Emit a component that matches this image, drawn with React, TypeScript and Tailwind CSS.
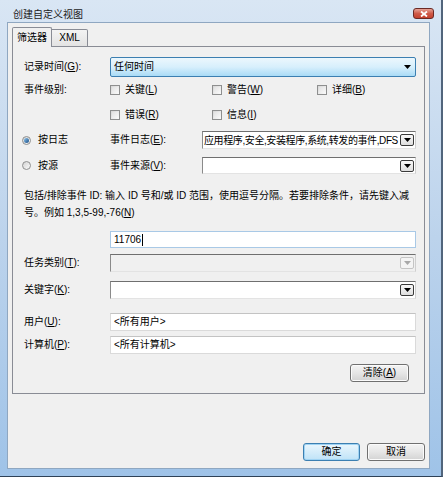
import React from 'react';

const font = "font-['Liberation_Sans','Noto_Sans_CJK_SC',sans-serif]";

function Key({ label, k, colon = true }: { label: string; k: string; colon?: boolean }) {
  return (
    <>
      {label}(<u>{k}</u>){colon ? ':' : ''}
    </>
  );
}

function Arrow({ color = '#000' }: { color?: string }) {
  return (
    <svg width="7" height="4" viewBox="0 0 7 4">
      <path d="M0 0h7L3.5 4z" fill={color} />
    </svg>
  );
}

function Combo({ text, disabled }: { text?: string; disabled?: boolean }) {
  return (
    <div
      className={`flex items-center h-full border border-t-[#6f6f6f] border-l-[#8a8a8a] border-r-[#cfcfcf] border-b-[#e3e3e3] ${
        disabled ? 'bg-[#f0f0f0]' : 'bg-white'
      }`}
    >
      <div className="flex-1 min-w-0 overflow-hidden whitespace-nowrap pl-[1px] text-[10px] leading-[15px] tracking-[-0.4px] text-black">
        {text}
      </div>
      <div
        className={`w-[14px] h-[12px] mr-[1px] shrink-0 rounded-[2px] flex items-center justify-center border ${
          disabled ? 'border-[#c4c4c4] bg-[#f4f4f4]' : 'border-[#3a3a3a] bg-gradient-to-b from-[#f7f7f7] to-[#dedede]'
        }`}
      >
        <Arrow color={disabled ? '#a8a8a8' : '#000'} />
      </div>
    </div>
  );
}

function Check({ label }: { label: React.ReactNode }) {
  return (
    <div className="flex items-center gap-[5px]">
      <div className="w-[10px] h-[10px] border border-[#8e8f8f] bg-gradient-to-br from-[#d6d6d6] to-[#fbfbfb] p-px">
        <div className="w-full h-full bg-gradient-to-br from-[#e2e2e2] to-[#f8f8f8]" />
      </div>
      <span className="text-[10px] leading-[14px] text-black">{label}</span>
    </div>
  );
}

function Radio({ checked, label }: { checked?: boolean; label: string }) {
  return (
    <div className="flex items-center gap-[7px] w-[88px] -ml-[2px]">
      <div className="w-[9px] h-[9px] rounded-full border border-[#8e8f8f] bg-gradient-to-br from-[#d4d4d4] to-[#fafafa] flex items-center justify-center">
        {checked && <div className="w-[5px] h-[5px] rounded-full bg-gradient-to-br from-[#8fc6ee] to-[#1a4f86]" />}
      </div>
      <span className="text-[10px] leading-[14px] text-black">{label}</span>
    </div>
  );
}

function Button({ children, primary, w }: { children: React.ReactNode; primary?: boolean; w: string }) {
  return (
    <div
      className={`${w} h-[18px] rounded-[3px] border flex items-center justify-center text-[10px] leading-[14px] text-black ${
        primary
          ? 'border-[#3c7fb1] bg-gradient-to-b from-[#eaf6fd] to-[#bfe3f7] shadow-[inset_0_0_0_1px_#9fd3f3]'
          : 'border-[#707070] bg-gradient-to-b from-[#f4f4f4] via-[#e6e6e6] to-[#d3d3d3] shadow-[inset_0_0_0_1px_#fbfbfb]'
      }`}
    >
      {children}
    </div>
  );
}

function Row({ label, mt, h, children }: { label: React.ReactNode; mt: string; h: string; children: React.ReactNode }) {
  return (
    <div className={`flex items-center ${mt} ${h}`}>
      <div className="w-[86px] shrink-0 text-[10px] leading-[14px] text-black">{label}</div>
      <div className="w-[306px] h-full">{children}</div>
    </div>
  );
}

function TextBox({ value, focused }: { value: string; focused?: boolean }) {
  return (
    <div
      className={`h-full bg-white border flex items-center pl-[3px] text-[10px] leading-[14px] text-black ${
        focused ? 'border-[#a9c9e6]' : 'border-[#dadada] border-t-[#c3c3c3]'
      }`}
    >
      {value}
      {focused && <span className="w-px h-[12px] bg-black ml-px" />}
    </div>
  );
}

export default function App() {
  return (
    <div className={`${font} w-[443px] h-[477px] flex flex-col bg-gradient-to-b from-[#d9e6f4] via-[#bcd3ec] to-[#9fc3e8] border-r-2 border-b border-r-[#51657c] border-b-[#2e4257]`}>
      <div className="h-[22px] flex items-start justify-between pl-[13px] pr-[7px]">
        <span className="text-[10px] leading-[14px] mt-[8px] text-[#1b1b1b]">创建自定义视图</span>
        <div className="mt-[8px] w-[21px] h-[11px] rounded-[3px] border border-[#6b2a25] bg-gradient-to-b from-[#e6a296] via-[#cf5a48] to-[#c4402c] flex items-center justify-center">
          <svg width="8" height="6" viewBox="0 0 8 6">
            <path d="M1 0.5L7 5.5M7 0.5L1 5.5" stroke="#fff" strokeWidth="1.8" />
          </svg>
        </div>
      </div>
      <div className="flex flex-1">
        <div className="w-[7px] shrink-0" />
        <div className="w-[423px] h-[447px] bg-[#f0f0f0] border border-[#8fa7c1] flex flex-col px-[4px] pt-[4px]">
          <div className="flex items-end h-[20px] relative z-10">
            <div className="h-[20px] w-[40px] border border-b-0 border-[#898c95] bg-[#f0f0f0] rounded-t-[2px] flex items-center justify-center text-[10px] leading-[14px] text-black">
              筛选器
            </div>
            <div className="h-[18px] w-[36px] border border-l-0 border-[#898c95] bg-gradient-to-b from-[#f3f3f3] to-[#e3e3e3] rounded-tr-[2px] flex items-center justify-center text-[10px] leading-[14px] text-black">
              XML
            </div>
          </div>
          <div className="-mt-px w-[413px] h-[348px] border border-[#898c95] bg-[#f0f0f0] pl-[11px] pr-[8px] flex flex-col">
            <Row label={<Key label="记录时间" k="G" />} mt="mt-[10px]" h="h-[20px]">
              <div className="h-full rounded-[2px] border border-[#3c7fb1] bg-gradient-to-b from-[#ecf7fd] via-[#d7effc] to-[#a9dbf6] flex items-center justify-between pl-[3px] pr-[4px]">
                <span className="text-[10px] leading-[14px] text-black">任何时间</span>
                <Arrow />
              </div>
            </Row>
            <div className="flex items-center mt-[5px] h-[16px]">
              <div className="w-[86px] text-[10px] leading-[14px] text-black">事件级别:</div>
              <div className="w-[102px]"><Check label={<Key label="关键" k="L" colon={false} />} /></div>
              <div className="w-[105px]"><Check label={<Key label="警告" k="W" colon={false} />} /></div>
              <Check label={<Key label="详细" k="B" colon={false} />} />
            </div>
            <div className="flex items-center mt-[9px] h-[16px]">
              <div className="w-[86px]" />
              <div className="w-[102px]"><Check label={<Key label="错误" k="R" colon={false} />} /></div>
              <Check label={<Key label="信息" k="I" colon={false} />} />
            </div>
            <div className="flex items-center mt-[8px] h-[18px]">
              <Radio checked label="按日志" />
              <div className="w-[92px] text-[10px] leading-[14px] text-black"><Key label="事件日志" k="E" /></div>
              <div className="w-[214px] h-full">
                <Combo text="应用程序,安全,安装程序,系统,转发的事件,DFS 复制,Hardware Events" />
              </div>
            </div>
            <div className="flex items-center mt-[8px] h-[17px]">
              <Radio label="按源" />
              <div className="w-[92px] text-[10px] leading-[14px] text-black"><Key label="事件来源" k="V" /></div>
              <div className="w-[214px] h-full">
                <Combo />
              </div>
            </div>
            <p className="mt-[13px] text-[10px] leading-[17px] text-black whitespace-nowrap">
              包括/排除事件 ID: 输入 ID 号和/或 ID 范围，使用逗号分隔。若要排除条件，请先键入减
              <br />
              号。例如 1,3,5-99,-76(<u>N</u>)
            </p>
            <div className="flex mt-[10px] h-[17px]">
              <div className="w-[86px]" />
              <div className="w-[306px] h-full">
                <TextBox value="11706" focused />
              </div>
            </div>
            <Row label={<Key label="任务类别" k="T" />} mt="mt-[6px]" h="h-[18px]">
              <Combo disabled />
            </Row>
            <Row label={<Key label="关键字" k="K" />} mt="mt-[9px]" h="h-[18px]">
              <Combo />
            </Row>
            <Row label={<Key label="用户" k="U" />} mt="mt-[14px]" h="h-[18px]">
              <TextBox value="<所有用户>" />
            </Row>
            <Row label={<Key label="计算机" k="P" />} mt="mt-[5px]" h="h-[18px]">
              <TextBox value="<所有计算机>" />
            </Row>
            <div className="flex justify-end mt-[10px] pr-[7px]">
              <Button w="w-[59px]">
                清除(<u>A</u>)
              </Button>
            </div>
          </div>
          <div className="flex justify-end gap-[7px] mt-[49px] w-[413px]">
            <Button w="w-[57px]" primary>确定</Button>
            <Button w="w-[58px]">取消</Button>
          </div>
        </div>
        <div className="flex-1" />
      </div>
      <div className="h-[7px]" />
    </div>
  );
}
